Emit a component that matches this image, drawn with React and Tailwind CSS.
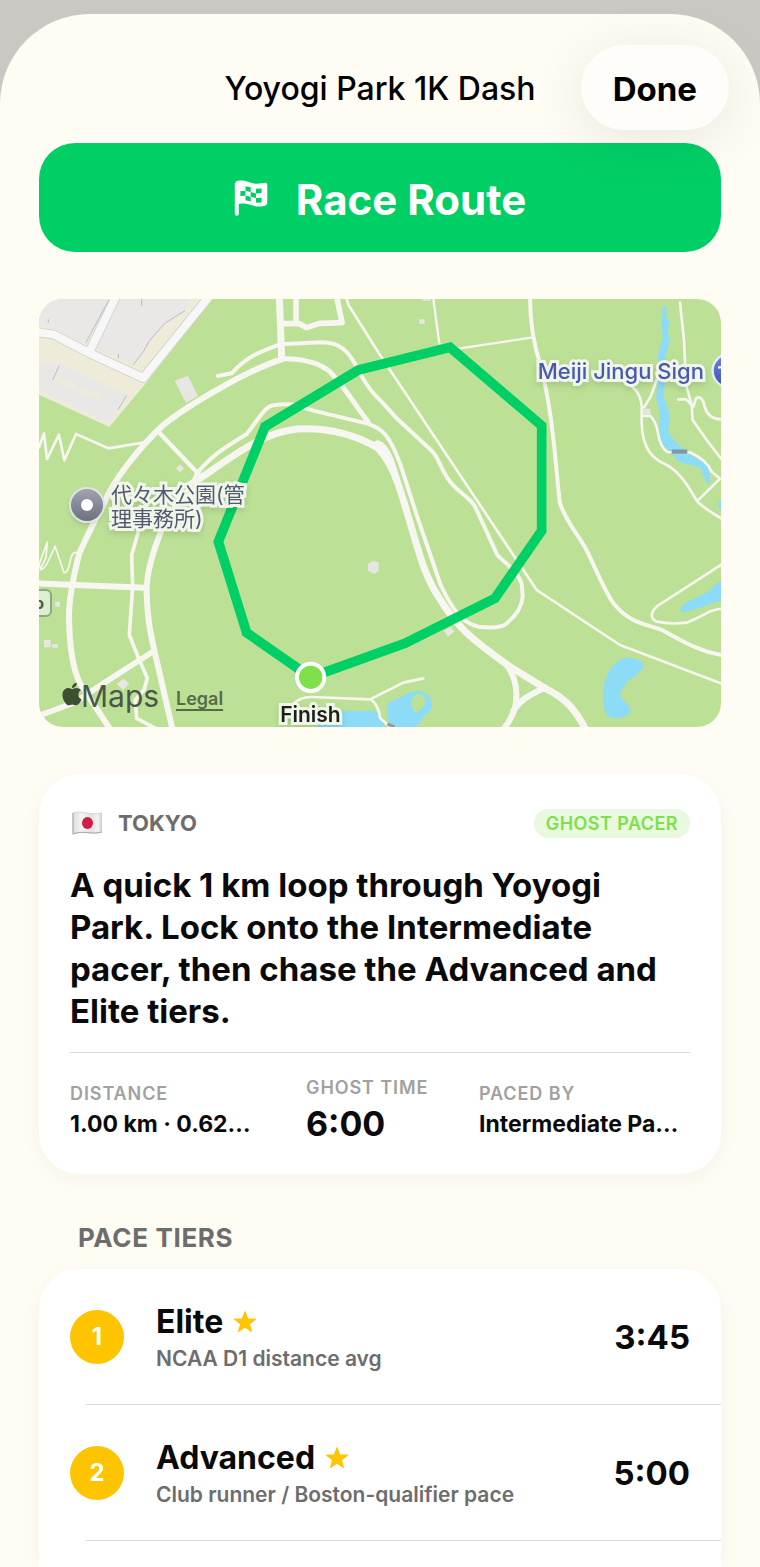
import React from "react";
import { FaApple } from "react-icons/fa";

const halo = "[paint-order:stroke_fill] [-webkit-text-stroke:6px_#f1f6ea] drop-shadow-md";

const tiers = [
  { rank: 1, name: "Elite", note: "NCAA D1 distance avg", time: "3:45" },
  { rank: 2, name: "Advanced", note: "Club runner / Boston-qualifier pace", time: "5:00" },
];

function FlagIcon() {
  return (
    <svg viewBox="0 0 34 36" className="h-9 w-[34px] shrink-0" aria-hidden="true">
      <path
        fill="#fff"
        d="M.8 4C.8 1.200 3.500.5 7 .5c7 0 9 3.200 16 3.200 3.500 0 6-.9 8-.9 1.500 0 2.300.8 2.300 2.300v17.400c0 3-3 4-8 4-7 0-10-3-17-3-1.500 0-2.800.2-3.500.5v9.500c0 1.500-.8 2.200-2 2.200s-2-.7-2-2.200z"
      />
      <g fill="#00cf66">
        <path d="M11.500 6.200l5.200 1v4.800l-5.200-1zM22 8.800l5.600-.4v4.600l-5.600.4zM6.400 11l5.100 0v4.800l-5.100.3zM16.700 12l5.300 1.400V18l-5.300-1.200zM11.500 15.800l5.200 1v4.600l-5.200-1.200zM22 18l5.600-.3v4.800l-5.600.2z" />
      </g>
    </svg>
  );
}

function JapanFlag() {
  return (
    <svg viewBox="0 0 32 30" className="h-[30px] w-8 shrink-0" role="img" aria-label="Japan">
      <defs>
        <linearGradient id="cloth" x1="0" x2="1">
          <stop offset="0" stopColor="#dedede" />
          <stop offset=".3" stopColor="#f4f4f4" />
          <stop offset=".65" stopColor="#e2e2e2" />
          <stop offset=".85" stopColor="#f3f3f3" />
          <stop offset="1" stopColor="#cfcfcf" />
        </linearGradient>
      </defs>
      <path d="M3 5C12 2 20 8 32 5v19c-11 3-18-2-29 2z" fill="url(#cloth)" stroke="#c9c9c9" strokeWidth=".8" />
      <path d="M3 5v21.500" stroke="#aaa" strokeWidth="1" />
      <path d="M3 26C14 22 21 27 32 24" fill="none" stroke="#aaa" strokeWidth="1" />
      <ellipse cx="17.500" cy="15" rx="5.500" ry="6" fill="#cb1f45" />
    </svg>
  );
}

function Star() {
  return (
    <svg viewBox="0 0 24 24" className="size-6 shrink-0" role="img" aria-label="Benchmark tier">
      <path
        fill="#ffc400"
        stroke="#ffc400"
        strokeWidth="1.200"
        strokeLinejoin="round"
        d="M12 1.800l2.600 7.200 7.700.2-6.100 4.700 2.200 7.400L12 17l-6.400 4.300 2.200-7.400-6.100-4.700 7.700-.2z"
      />
    </svg>
  );
}

function MapDrawing() {
  return (
    <svg viewBox="27 27 2046 1284" className="block w-full" role="img" aria-label="Route map of Yoyogi Park">
      <defs>
        <linearGradient id="shrine" x1="0" x2="0" y1="0" y2="1">
          <stop offset="0" stopColor="#6f83dc" />
          <stop offset="1" stopColor="#3d52b5" />
        </linearGradient>
      </defs>
      <rect x="27" y="27" width="2046" height="1284" fill="#bce196" />
      <path d="M27 27H545L350 277 238 411 27 314z" fill="#efebd9" />
      <g fill="#e9e8e7">
        <path d="M27 78L62 27H236L238 42 166 161 27 98z" />
        <path d="M264 27H480L462 66 402 105 345 180 312 226 190 172z" />
        <path d="M27 216L95 222 290 316 236 402 27 300z" />
      </g>
      <g fill="none" stroke="#bdbcba" strokeWidth="3">
        <path d="M236 30L168 158M465 62L404 100 356 155 342 182 310 224M265 205V192M88 226L68 270M145 302V288M290 316L264 360M335 27V48M55 88V98" />
      </g>
      <path d="M78 262L142 288 212 318 206 332 142 302 72 270z" fill="#efebd9" />
      <g fill="none" strokeLinejoin="round">
        <path d="M20 126L72 134 180 190 340 264 545 10M178 186L258 20" stroke="#cfcfcd" strokeWidth="29" />
        <path d="M20 126L72 134 180 190 340 264 545 10M178 186L258 20" stroke="#f7f7f7" strokeWidth="24" />
      </g>

      <g fill="#8cdbf7">
        <path d="M1898 50Q1904 44 1910 54L1908 78 1918 96 1914 120 1918 155 1906 205 1910 240 1900 318 1920 372 1914 425 1938 458 2000 506 2034 516 2042 578Q2034 584 2024 566L2010 532 1984 526 1946 516 1930 494 1894 460 1886 420 1888 360 1878 326 1882 282 1886 222 1884 192 1898 140 1894 100z" />
        <path d="M2073 630Q2056 640 2073 664z" />
        <path d="M2073 876Q2056 878 2040 900L2022 912 1966 938Q1944 958 1956 968L2020 950 2046 940 2073 932z" />
        <path d="M1770 1110Q1794 1096 1824 1110 1850 1124 1838 1136 1816 1160 1794 1172L1772 1206Q1766 1222 1788 1238 1810 1256 1796 1272 1780 1288 1744 1284 1726 1276 1722 1250 1718 1210 1724 1176 1736 1128 1770 1110z" />
        <path d="M1072 1246Q1080 1230 1110 1224 1130 1206 1168 1202 1206 1212 1206 1242 1202 1270 1184 1276L1160 1311H1082Q1066 1276 1072 1246z" />
        <path d="M860 1262H1036Q1056 1290 1066 1311H860z" />
      </g>
      <path d="M1146 1226Q1158 1206 1178 1214 1190 1230 1184 1242 1172 1268 1156 1266 1140 1250 1146 1226z" fill="#bce196" />

      <g fill="none" stroke="#f8f6f0" strokeLinecap="round" strokeLinejoin="round">
        <g strokeWidth="21">
          <path d="M748 20L755 205" />
          <path d="M515 562C620 490 700 428 800 417 890 412 970 430 1045 475 1085 520 1100 560 1135 680 1165 780 1180 850 1225 920 1280 1010 1320 1045 1440 1130L1545 1195C1610 1225 1640 1265 1668 1320" />
        </g>
        <path d="M1044 462Q1062 466 1080 510L1100 570" strokeWidth="22" />
        <g strokeWidth="18">
          <path d="M755 208C660 238 480 340 400 405 330 470 250 570 222 640 195 690 170 740 148 790 130 860 117 920 117 980 118 1060 125 1130 150 1180L242 1320" />
          <path d="M515 562C470 600 430 645 397 715 370 780 348 850 350 910 352 990 362 1030 375 1090L428 1320" />
          <path d="M20 880L345 893" />
          <path d="M1428 1122C1462 1165 1462 1215 1456 1250 1448 1285 1430 1305 1415 1325M1545 1192C1500 1215 1475 1225 1450 1262" />
        </g>
        <path d="M20 1280L135 1237 220 1180 370 1084" strokeWidth="17" />
        <path d="M755 206C830 205 870 220 900 245 945 292 975 345 1015 396" strokeWidth="15" />
        <path d="M385 425L515 562" strokeWidth="13" />
        <path d="M798 20V98M758 101H808L830 113 868 100 936 98 920 20" strokeWidth="17" />
        <path d="M500 552C540 500 580 475 650 432 685 390 700 352 730 346Q770 340 800 346L850 362 1010 400C1060 415 1080 440 1110 520L1165 690 1232 885C1270 965 1300 1000 1345 1010 1380 1014 1410 1014 1425 1004 1450 985 1475 955 1478 920L1475 880C1460 840 1430 825 1402 795L1340 660C1325 620 1280 610 1250 560 1225 520 1225 500 1205 482L1100 385 1055 335C1010 295 1000 265 985 240 955 180 930 158 875 157L750 163C690 185 650 200 605 250L563 258" strokeWidth="12" />
        <path d="M500 552L490 572 474 582M325 725L305 795 308 890 298 1035 324 1100 352 1165 342 1200 316 1230 320 1285 382 1318" strokeWidth="11" />
        <path d="M27 472L42 430 51 507 87 434 103 511 138 432 235 475 345 457M950 27L956 46 1050 195 1380 690 1480 840 1520 900 1770 1065 2080 1183" strokeWidth="8" />
        <path d="M1210 27L1228 160M1285 176L1503 143" strokeWidth="7" />
        <path d="M1500 20C1500 100 1512 165 1530 220 1572 380 1576 530 1590 640 1610 700 1650 740 1672 785 1710 865 1735 925 1755 945 1800 1000 1850 1002 1900 1022 1970 1060 2010 1085 2080 1096" strokeWidth="12" />
        <g strokeWidth="8">
          <path d="M1950 38L1962 150 1968 285 1985 345 1988 390 2030 450 2080 515M1945 328H1968L1990 350 1998 325Q2016 314 2024 350 2034 390 2080 388" />
          <path d="M1790 280Q1832 300 1835 350V400C1838 480 1870 505 1900 520 1955 545 1980 600 2003 636 2030 662 2060 675 2080 690M1880 270L1862 320 1842 352M1838 378H1862Q1880 400 1884 430 1890 470 1912 486L1980 487Q2030 510 2045 545L2070 566 2003 632" />
          <path d="M2080 820L1882 948Q1850 978 1880 995 1920 1004 1970 998 2010 982 2038 965 2060 956 2080 956" />
          <path d="M786 1245Q810 1220 845 1221L1020 1228 1120 1178 1180 1165M1025 1230Q1048 1250 1050 1284L1090 1320" />
        </g>
        <path d="M30 840L48 802 52 756 28 822Q34 870 75 768L102 848Q115 850 122 806 130 780 142 790" strokeWidth="5" />
      </g>
      <path d="M1925 485H1972" stroke="#7f98a3" strokeWidth="13" />
      <path d="M1072 1302L1094 1311" stroke="#999" strokeWidth="9" />
      <g fill="#e7e6e3">
        <path d="M434 272L474 258 504 318 468 339z" />
        <path d="M450 523L462 535 450 547 438 535z" />
        <path d="M1168 88H1184V101H1168zM1174 27H1202V32H1180zM1840 356H1861V374H1840zM1241 1022L1262 1012 1274 1024 1254 1040z" />
        <path d="M1030 812L1046 818V842L1034 852 1014 842V822z" />
        <path d="M76 935H90V950H76zM42 1050H62V1072H42zM66 1063H84V1073H66zM260 1182L280 1166 298 1180 280 1200z" />
      </g>
      <path
        d="M842 1162L650 1028 565 755 705 410 985 240 1260 172 1535 407V722L1395 925 1125 1060z"
        fill="none"
        stroke="#00cf66"
        strokeWidth="29"
      />
      <circle cx="842" cy="1162" r="41" fill="#7fe04a" stroke="#fff" strokeWidth="12" />
      <circle cx="2098" cy="242" r="50" fill="url(#shrine)" stroke="#e5ecf0" strokeWidth="7" />
      <path d="M2064 232H2080" fill="none" stroke="#fff" strokeWidth="7" />
    </svg>
  );
}

function Stat({ label, value, big }) {
  return (
    <div className="min-w-0">
      <dt className="text-lg leading-6 font-semibold tracking-wider whitespace-nowrap text-[#a1a1a1]">{label}</dt>
      <dd className={big ? "text-[34px] leading-[48px] font-bold" : "text-[23px] leading-9 font-bold whitespace-nowrap"}>{value}</dd>
    </div>
  );
}

export default function App() {
  return (
    <div className="flex min-h-screen flex-col bg-[#cbc8c3] pt-3.5 font-[Inter,'Noto_Sans_CJK_JP',sans-serif] text-[#0a0a0a]">
      <main className="flex flex-1 flex-col rounded-t-[90px] bg-[#fffcf4]">
        <header className="grid grid-cols-[1fr_auto_1fr] items-center px-[31px] pt-[31px]">
          <span />
          <h1 className="pt-0.5 text-[32px] leading-10 font-medium text-black">Yoyogi Park 1K Dash</h1>
          <button className="z-10 h-[85px] justify-self-end rounded-full bg-[#fffdf9] px-8 pt-1 text-[33px] font-bold text-black shadow-[0_10px_60px_rgba(0,0,0,0.09)]">
            Done
          </button>
        </header>

        <div className="flex flex-1 flex-col px-[39px] pt-[13px]">
          <button className="flex h-[109px] items-center justify-center gap-7 rounded-[36px] bg-[#00cf66] text-[42px] font-bold text-white">
            <FlagIcon />
            <span className="pt-1">Race Route</span>
          </button>

          <section className="relative mt-[47px] overflow-hidden rounded-3xl" aria-label="Map">
            <MapDrawing />
            <div className="absolute top-[44%] left-[30px] flex size-9 items-center justify-center rounded-full border-2 border-[#dfe3e0] bg-gradient-to-b from-[#a0a3b0] to-[#6c7080] shadow-md">
              <span className="size-3 rounded-full bg-white" />
            </div>
            <p className={`absolute top-[43%] left-[72px] text-[21px] leading-6 whitespace-nowrap text-[#535a70] ${halo}`}>代々木公園(管<br />理事務所)</p>
            <p className={`absolute top-[13.500%] right-[2.500%] text-[22px] leading-7 font-medium text-[#4759b3] ${halo}`}>Meiji Jingu Sign</p>
            <span className="absolute top-[67.800%] -left-3 flex h-7 w-[25px] items-center justify-end rounded-md border-2 border-[#8fa585] bg-[#dcefcf] pr-1.5 text-base font-bold text-[#4c5a48]">
              o
            </span>
            <div className="absolute bottom-[13px] left-5 flex items-center text-[#3e4f33]">
              <FaApple className="-mr-1 mb-1 size-[26px]" aria-label="Apple" />
              <span className="text-[30px] leading-9 text-[#4c5747]">Maps</span>
            </div>
            <a href="#legal" className="absolute bottom-4 left-[137px] text-lg leading-6 font-semibold text-[#566b48] underline decoration-2 underline-offset-4">
              Legal
            </a>
            <p className={`absolute bottom-0 left-[39.800%] -translate-x-1/2 text-[21px] leading-6 font-semibold text-[#1b211a] ${halo}`}>Finish</p>
          </section>

          <section className="mt-[47px] rounded-[40px] bg-white px-[31px] pt-[34px] pb-[26px] shadow-[0_6px_24px_rgba(0,0,0,0.04)]">
            <div className="flex items-center justify-between">
              <div className="flex items-center gap-4 text-[22px] leading-[30px] font-bold text-[#6d6d6d]">
                <JapanFlag />
                <span>TOKYO</span>
              </div>
              <span className="rounded-full bg-[#e8f9df] px-3 text-lg leading-[29px] font-semibold tracking-wide text-[#7fdf4b]">GHOST PACER</span>
            </div>
            <p className="mt-[26px] text-[33px] leading-[42px] font-bold">
              A quick 1 km loop through Yoyogi Park. Lock onto the Intermediate pacer, then chase the Advanced and Elite tiers.
            </p>
            <hr className="mt-5 border-[#dcdcdc]" />
            <dl className="mt-[23px] grid grid-cols-[188fr_125fr_211fr] items-center gap-12">
              <Stat label="DISTANCE" value="1.00 km · 0.62…" />
              <Stat label="GHOST TIME" value="6:00" big />
              <Stat label="PACED BY" value="Intermediate Pa…" />
            </dl>
          </section>

          <h2 className="mt-12 ml-[39px] text-[26px] leading-8 font-bold tracking-wide text-[#6d6d6d]">PACE TIERS</h2>
          <ol className="mt-[15px] flex-1 rounded-t-[40px] bg-white shadow-[0_6px_24px_rgba(0,0,0,0.04)]">
            {tiers.map((t) => (
              <li key={t.rank}>
                <div className="flex h-[135px] items-center gap-8 px-[31px]">
                  <span className="flex size-[54px] shrink-0 items-center justify-center rounded-full bg-[#ffc400] text-2xl font-bold text-white">
                    {t.rank}
                  </span>
                  <div className="min-w-0 flex-1 pt-1.5">
                    <h3 className="flex items-center gap-2.5 text-[32px] leading-[38px] font-bold">
                      {t.name}
                      <Star />
                    </h3>
                    <p className="text-[21px] leading-9 font-semibold text-[#6d6d6d]">{t.note}</p>
                  </div>
                  <span className="text-[33px] leading-10 font-bold">{t.time}</span>
                </div>
                <hr className="ml-[47px] border-[#dcdcdc]" />
              </li>
            ))}
          </ol>
        </div>
      </main>
    </div>
  );
}
